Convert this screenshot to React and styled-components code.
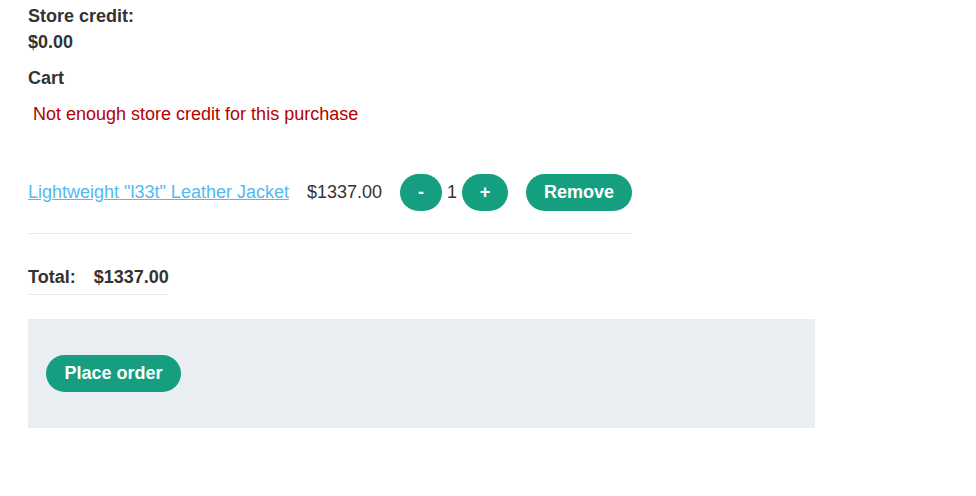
import React from "react";
import styled, { createGlobalStyle } from "styled-components";

const Global = createGlobalStyle`
  html, body { margin: 0; padding: 0; background: #fff; }
  body { font-family: "Liberation Sans", Arial, sans-serif; font-size: 18px; color: #333332; }
`;

const Page = styled.div`
  padding: 3px 28px 0 28px;
  width: 787px;
`;

const Strong = styled.p`
  margin: 0;
  font-weight: bold;
  line-height: 26px;
`;

const Heading = styled.p`
  margin: 10px 0 0 0;
  font-weight: bold;
  line-height: 26px;
`;

const ErrorMsg = styled.p`
  margin: 10px 0 0 5px;
  color: #b50000;
  line-height: 26px;
`;

const CartTable = styled.div`
  margin-top: 47px;
  width: 604px;
  border-bottom: 1px solid #e6e6e6;
  padding-bottom: 22px;
  display: flex;
  align-items: center;
  white-space: nowrap;
  & > * { flex-shrink: 0; }
`;

const ItemLink = styled.a`
  color: #54b9f2;
  text-decoration: underline;
  margin-right: 18px;
`;

const Price = styled.span`
  margin-right: 18px;
`;

const Btn = styled.button`
  font-family: "Liberation Sans", Arial, sans-serif;
  font-weight: bold;
  font-size: 18px;
  color: #fff;
  background: #159e80;
  border: none;
  border-radius: 20px;
  height: 37px;
  width: ${(p) => p.$w}px;
  padding: 0;
  cursor: pointer;
`;

const Qty = styled.span`
  margin: 0 5px;
`;

const Spacer = styled.span`
  width: 18px;
  display: inline-block;
`;

const TotalRow = styled.div`
  margin-top: 34px;
  width: 140px;
  border-bottom: 1px solid #e6e6e6;
  padding: 0 0 8px 0;
  display: flex;
  gap: 18px;
  font-weight: bold;
  line-height: 18px;
  white-space: nowrap;
`;

const OrderPanel = styled.div`
  margin-top: 24px;
  background: #e9eef2;
  padding: 36px 18px;
`;

export default function App() {
  return (
    <>
      <Global />
      <Page>
        <Strong>Store credit:</Strong>
        <Strong>$0.00</Strong>
        <Heading>Cart</Heading>
        <ErrorMsg>Not enough store credit for this purchase</ErrorMsg>
        <CartTable>
          <ItemLink href="#">Lightweight "l33t" Leather Jacket</ItemLink>
          <Price>$1337.00</Price>
          <Btn $w={42}>-</Btn>
          <Qty>1</Qty>
          <Btn $w={46}>+</Btn>
          <Spacer />
          <Btn $w={106}>Remove</Btn>
        </CartTable>
        <TotalRow>
          <span>Total:</span>
          <span>$1337.00</span>
        </TotalRow>
        <OrderPanel>
          <Btn $w={135}>Place order</Btn>
        </OrderPanel>
      </Page>
    </>
  );
}
